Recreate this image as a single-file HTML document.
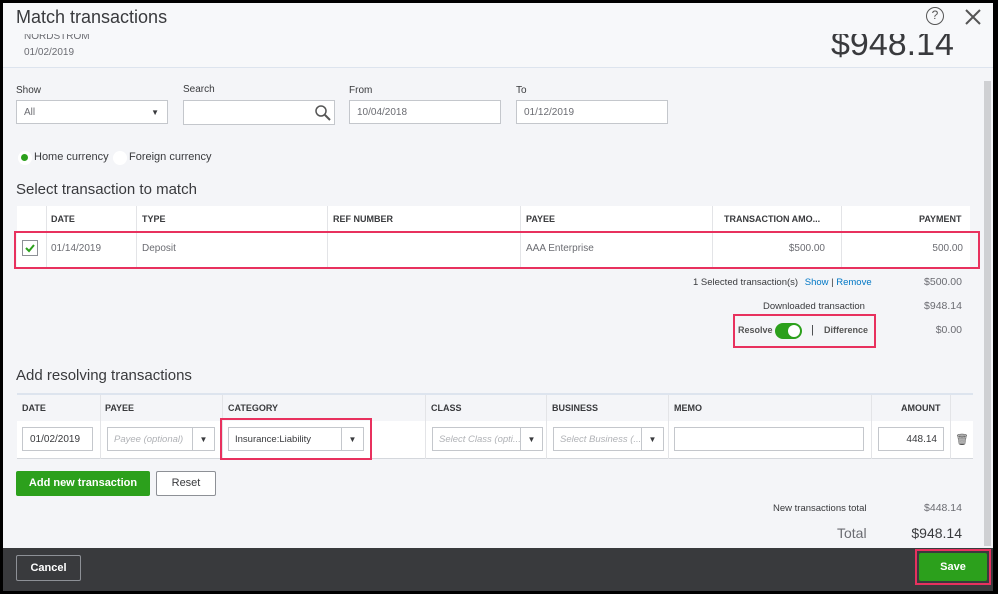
<!DOCTYPE html>
<html><head><meta charset="utf-8"><style>
*{margin:0;padding:0;box-sizing:border-box}
body{width:998px;height:594px;background:#000;font-family:"Liberation Sans",sans-serif;position:relative;overflow:hidden;color:#393a3d}
.a{position:absolute}
#main{left:3px;top:3px;width:990px;height:588px;background:#f4f5f8;overflow:hidden}
.lbl{font-size:10px;color:#393a3d}
.inp{background:#fff;border:1px solid #c4c7cc;font-size:10px;color:#6b6c72;padding-left:7px;display:flex;align-items:center}
.th{font-size:9px;font-weight:bold;color:#393a3d}
.td{font-size:10px;color:#6b6c72}
.red{border:2px solid #e8315e}
.sel{background:#fff;border:1px solid #c4c7cc;font-size:9.5px;color:#b0b2b6;font-style:italic;padding-left:6px;display:flex;align-items:center}
.arr{position:absolute;right:0;top:0;bottom:0;width:22px;border-left:1px solid #c4c7cc;display:flex;align-items:center;justify-content:center;font-size:8px;color:#393a3d;font-style:normal}
</style></head><body>
<div id="main" class="a">
<div class="a" style="left:0;top:0;width:990px;height:65px;background:#f7f8fa;border-bottom:1px solid #dde4ee"></div>
<div class="a" style="left:21px;top:28px;font-size:10px;color:#6b6c72">NORDSTROM</div>
<div class="a" style="left:21px;top:44px;font-size:10px;color:#6b6c72">01/02/2019</div>
<div class="a" style="left:828px;top:22px;font-size:34px;color:#393a3d">$948.14</div>
<div class="a" style="left:0;top:0;width:990px;height:31px;background:#f7f8fa"></div>
<div class="a" style="left:13px;top:4px;font-size:18px;color:#393a3d">Match transactions</div>
<div class="a" style="left:923px;top:4px;width:18px;height:18px;border:1.5px solid #555;border-radius:50%;font-size:12px;text-align:center;line-height:15px;color:#555">?</div>
<svg class="a" style="left:961px;top:5px" width="18" height="18"><path d="M2 2L16 16M16 2L2 16" stroke="#555" stroke-width="2"/></svg>
<div class="a" style="left:981px;top:78px;width:7px;height:465px;background:#cfd0d3"></div>

<div class="a lbl" style="left:13px;top:82px">Show</div>
<div class="a inp" style="left:13px;top:97px;width:152px;height:24px">All<span style="position:absolute;right:8px;font-size:8px;color:#393a3d">▼</span></div>
<div class="a lbl" style="left:180px;top:81px">Search</div>
<div class="a inp" style="left:180px;top:97px;width:152px;height:25px"><svg style="position:absolute;right:2px" width="18" height="18"><circle cx="7" cy="7" r="5" fill="none" stroke="#555" stroke-width="1.5"/><path d="M11 11L16 16" stroke="#555" stroke-width="2"/></svg></div>
<div class="a lbl" style="left:346px;top:82px">From</div>
<div class="a inp" style="left:346px;top:97px;width:152px;height:24px">10/04/2018</div>
<div class="a lbl" style="left:513px;top:82px">To</div>
<div class="a inp" style="left:513px;top:97px;width:152px;height:24px">01/12/2019</div>

<div class="a" style="left:15px;top:148px;width:14px;height:14px;border-radius:50%;background:#fff"></div>
<div class="a" style="left:18px;top:151px;width:7px;height:7px;border-radius:50%;background:#2ca01c"></div>
<div class="a" style="left:31px;top:148px;font-size:11px">Home currency</div>
<div class="a" style="left:110px;top:148px;width:14px;height:14px;border-radius:50%;background:#fff"></div>
<div class="a" style="left:126px;top:148px;font-size:11px">Foreign currency</div>
<div class="a" style="left:13px;top:178px;font-size:15px;color:#393a3d">Select transaction to match</div>

<div class="a" style="left:14px;top:203px;width:953px;height:28px;background:#fff"></div>
<div class="a" style="left:14px;top:231px;width:953px;height:34px;background:#fff"></div>
<div class="a th" style="left:48px;top:211px">DATE</div>
<div class="a th" style="left:139px;top:211px">TYPE</div>
<div class="a th" style="left:330px;top:211px">REF NUMBER</div>
<div class="a th" style="left:523px;top:211px">PAYEE</div>
<div class="a th" style="left:721px;top:211px">TRANSACTION AMO...</div>
<div class="a th" style="left:916px;top:211px">PAYMENT</div>
<div class="a" style="left:43px;top:203px;width:1px;height:62px;background:#e3e4e7"></div>
<div class="a" style="left:133px;top:203px;width:1px;height:62px;background:#e3e4e7"></div>
<div class="a" style="left:324px;top:203px;width:1px;height:62px;background:#e3e4e7"></div>
<div class="a" style="left:517px;top:203px;width:1px;height:62px;background:#e3e4e7"></div>
<div class="a" style="left:709px;top:203px;width:1px;height:62px;background:#e3e4e7"></div>
<div class="a" style="left:838px;top:203px;width:1px;height:62px;background:#e3e4e7"></div>
<div class="a red" style="left:11px;top:228px;width:966px;height:38px"></div>
<div class="a" style="left:19px;top:237px;width:16px;height:16px;border:1px solid #8d9096;background:#fff"></div>
<svg class="a" style="left:21px;top:239px" width="12" height="12"><path d="M2 6L5 9L10 3" fill="none" stroke="#2ca01c" stroke-width="2"/></svg>
<div class="a td" style="left:48px;top:240px">01/14/2019</div>
<div class="a td" style="left:139px;top:240px">Deposit</div>
<div class="a td" style="left:523px;top:240px">AAA Enterprise</div>
<div class="a td" style="left:770px;top:240px;width:52px;text-align:right">$500.00</div>
<div class="a td" style="left:900px;top:240px;width:60px;text-align:right">500.00</div>

<div class="a" style="left:690px;top:274px;font-size:9.5px">1 Selected transaction(s) <span style="color:#0077c5;margin-left:4px">Show</span> | <span style="color:#0077c5">Remove</span></div>
<div class="a" style="left:900px;top:273px;width:59px;text-align:right;font-size:10.5px;color:#6b6c72">$500.00</div>
<div class="a" style="left:760px;top:298px;font-size:9.5px">Downloaded transaction</div>
<div class="a" style="left:900px;top:297px;width:59px;text-align:right;font-size:10.5px;color:#6b6c72">$948.14</div>
<div class="a red" style="left:730px;top:311px;width:143px;height:34px"></div>
<div class="a" style="left:735px;top:322px;font-size:9px;font-weight:bold;color:#555">Resolve</div>
<div class="a" style="left:772px;top:320px;width:27px;height:16px;border-radius:8px;background:#2ca01c"></div>
<div class="a" style="left:785px;top:322px;width:12px;height:12px;border-radius:50%;background:#fff"></div>
<div class="a" style="left:808px;top:321px;font-size:11px">|</div>
<div class="a" style="left:821px;top:322px;font-size:9px;font-weight:bold;color:#555">Difference</div>
<div class="a" style="left:900px;top:321px;width:59px;text-align:right;font-size:10.5px;color:#6b6c72">$0.00</div>

<div class="a" style="left:13px;top:364px;font-size:15px">Add resolving transactions</div>
<div class="a" style="left:14px;top:390px;width:956px;height:2px;background:#dde4ee"></div>
<div class="a" style="left:14px;top:418px;width:956px;height:38px;background:#fff;border-bottom:1px solid #d4d7dc"></div>
<div class="a th" style="left:19px;top:400px">DATE</div>
<div class="a th" style="left:102px;top:400px">PAYEE</div>
<div class="a th" style="left:225px;top:400px">CATEGORY</div>
<div class="a th" style="left:428px;top:400px">CLASS</div>
<div class="a th" style="left:549px;top:400px">BUSINESS</div>
<div class="a th" style="left:671px;top:400px">MEMO</div>
<div class="a th" style="left:898px;top:400px">AMOUNT</div>
<div class="a" style="left:97px;top:392px;width:1px;height:64px;background:#e3e4e7"></div>
<div class="a" style="left:219px;top:392px;width:1px;height:64px;background:#e3e4e7"></div>
<div class="a" style="left:422px;top:392px;width:1px;height:64px;background:#e3e4e7"></div>
<div class="a" style="left:543px;top:392px;width:1px;height:64px;background:#e3e4e7"></div>
<div class="a" style="left:665px;top:392px;width:1px;height:64px;background:#e3e4e7"></div>
<div class="a" style="left:868px;top:392px;width:1px;height:64px;background:#e3e4e7"></div>
<div class="a" style="left:947px;top:392px;width:1px;height:64px;background:#e3e4e7"></div>
<div class="a inp" style="left:19px;top:424px;width:71px;height:24px;color:#393a3d">01/02/2019</div>
<div class="a sel" style="left:104px;top:424px;width:108px;height:24px">Payee (optional)<span class="arr">▼</span></div>
<div class="a red" style="left:217px;top:415px;width:152px;height:42px"></div>
<div class="a sel" style="left:225px;top:424px;width:136px;height:24px;color:#393a3d;font-style:normal">Insurance:Liability<span class="arr">▼</span></div>
<div class="a sel" style="left:429px;top:424px;width:111px;height:24px">Select Class (opti...<span class="arr">▼</span></div>
<div class="a sel" style="left:550px;top:424px;width:111px;height:24px">Select Business (...<span class="arr">▼</span></div>
<div class="a inp" style="left:671px;top:424px;width:190px;height:24px"></div>
<div class="a inp" style="left:875px;top:424px;width:66px;height:24px;justify-content:flex-end;padding-right:6px;color:#393a3d">448.14</div>
<div class="a" style="left:952px;top:430px;font-size:11px;color:#555">🗑</div>

<div class="a" style="left:13px;top:468px;width:134px;height:25px;background:#2ca01c;border-radius:2px;color:#fff;font-size:11px;font-weight:bold;text-align:center;line-height:25px">Add new transaction</div>
<div class="a" style="left:153px;top:468px;width:60px;height:25px;background:#fff;border:1px solid #8d9096;border-radius:2px;font-size:11px;text-align:center;line-height:23px">Reset</div>

<div class="a" style="left:770px;top:500px;font-size:9.5px">New transactions total</div>
<div class="a" style="left:900px;top:499px;width:59px;text-align:right;font-size:10.5px;color:#6b6c72">$448.14</div>
<div class="a" style="left:834px;top:522px;font-size:14px;color:#6b6c72">Total</div>
<div class="a" style="left:880px;top:522px;width:79px;text-align:right;font-size:14px">$948.14</div>

<div class="a" style="left:0;top:545px;width:990px;height:43px;background:#393a3d"></div>
<div class="a" style="left:13px;top:552px;width:65px;height:26px;border:1px solid #8d9096;border-radius:2px;color:#fff;font-size:11px;font-weight:bold;text-align:center;line-height:24px">Cancel</div>
<div class="a red" style="left:912px;top:546px;width:76px;height:36px"></div>
<div class="a" style="left:916px;top:550px;width:68px;height:28px;background:#2ca01c;border-radius:2px;color:#fff;font-size:11px;font-weight:bold;text-align:center;line-height:28px">Save</div>
</div>
</body></html>
